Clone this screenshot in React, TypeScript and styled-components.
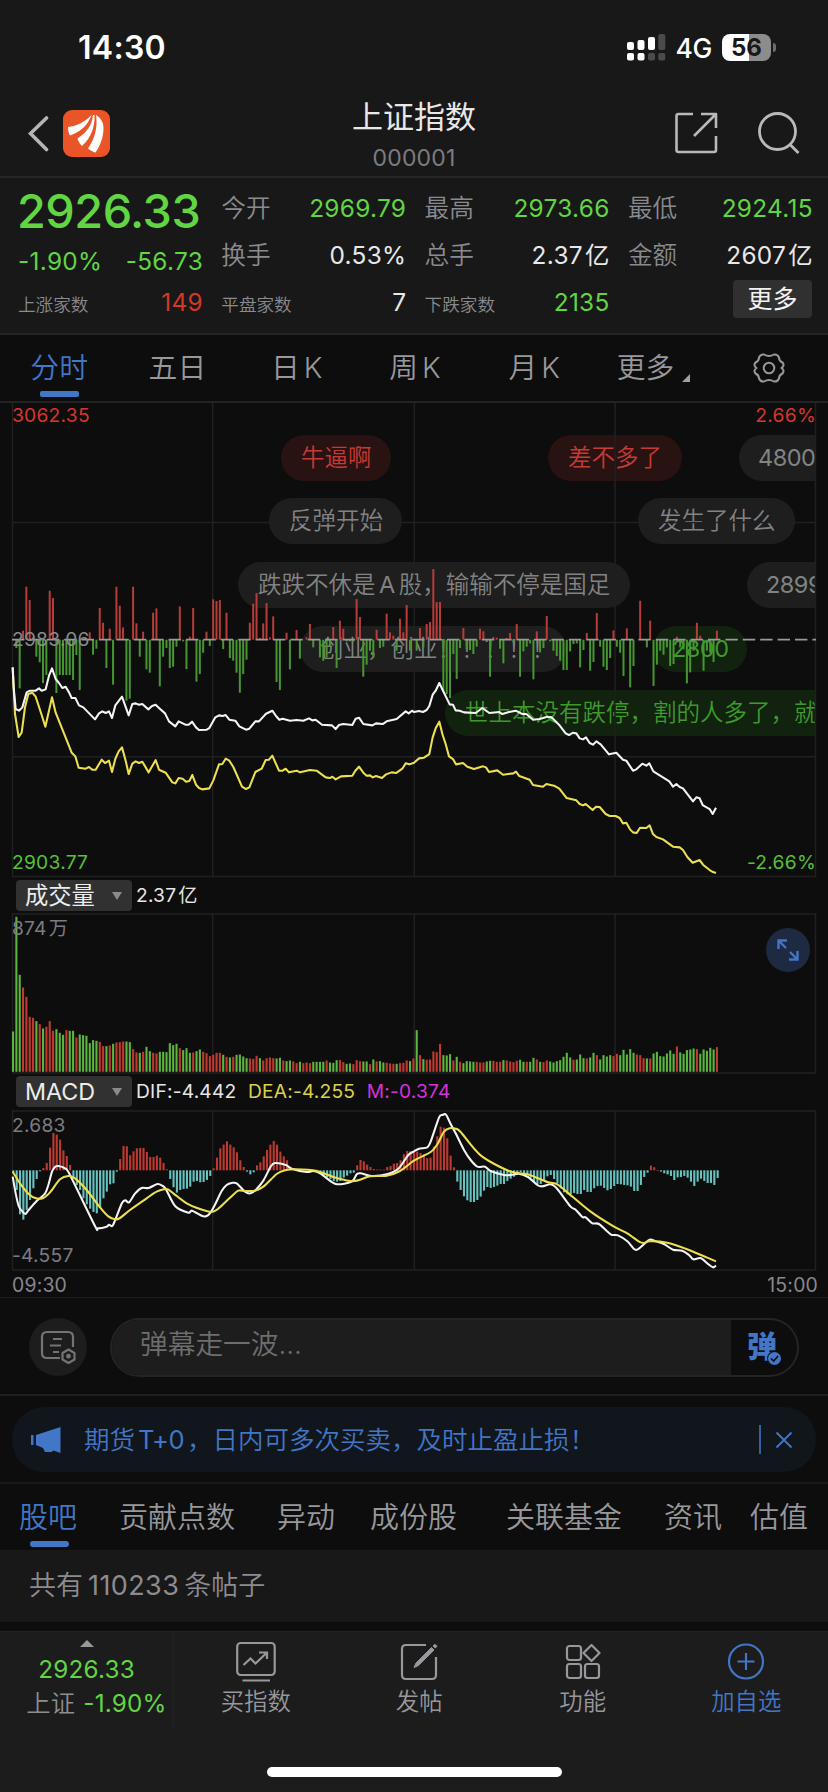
import React from "react";
import styled, { createGlobalStyle } from "styled-components";

const GREEN = "#62d543";
const RED = "#d8352b";
const BLUE = "#4276c6";
const GREY = "#8a8a8f";

const GlobalStyle = createGlobalStyle`
  * { box-sizing: border-box; }
  body {
    margin: 0;
    background: #0d0d0d;
    font-family: Inter, "Noto Sans CJK SC", sans-serif;
    -webkit-font-smoothing: antialiased;
  }
  svg { display: block; }
`;

/* ---------- market data ---------- */

/* Minute bars around the previous close: [minute, signed height]. */
const FLOW: number[][] = [
  [1,-25],[2,-146],[3,27],[4,159],[5,119],[7,-51],[8,-68],[9,-130],[10,-106],[11,147],[12,125],[13,-160],[14,-106],[15,-106],[16,-106],[17,-106],[18,-121],[19,-46],[20,-151],
  [23,22],[24,-45],[25,-27],[26,95],[27,51],[28,-85],[29,33],[30,-135],[31,159],[32,102],[33,37],[34,-183],[35,-177],[36,159],[37,49],[38,-51],[39,24],[40,-89],[41,-99],[42,81],[43,94],[44,-140],[45,-51],[46,-25],[47,-85],[48,-81],[49,-21],
  [50,100],[51,-5],[52,-88],[53,9],[54,95],[55,-126],[56,-103],[57,-39],[58,24],[59,-19],[60,121],[61,116],[62,119],[63,-28],[64,81],[65,-55],[66,-63],[67,-99],[68,-159],[69,-103],[70,-60],[71,51],[72,108],[73,140],[74,5],[75,49],[76,110],[77,7],[78,70],[79,-127],[80,-151],
  [82,21],[83,-89],[85,29],[86,-57],[88,7],[89,47],[90,-23],[92,-53],[93,-63],[94,-53],[95,-21],[96,38],[97,-85],[98,57],[99,33],[100,-5],[101,-5],[102,-5],[103,122],[104,68],[105,-111],[106,-75],[107,-33],[108,-53],[109,30],[110,-25],[111,-21],[112,78],[113,22],[114,12],[115,-33],[116,63],[117,22],[118,104],[119,-33],
  [121,-33],[122,35],[123,-23],[124,47],[125,53],[126,212],[127,113],[128,113],[129,-155],[130,-163],[131,-175],[132,-43],[133,-118],[134,-25],[135,35],[136,-29],[137,-31],[138,-43],[139,-21],[140,33],[141,25],[142,-7],[143,-111],[144,8],[145,6],[146,-27],[147,-71],[148,5],[149,20],[150,-7],[151,47],[152,-111],[153,-35],[154,-21],[155,-11],[156,-119],[157,25],[158,-38],[159,-25],
  [160,71],[161,-5],[162,-33],[163,-49],[164,-63],[165,-91],[166,-91],[167,-35],[168,-13],[169,-11],[170,-83],[171,-31],[172,20],[173,-93],[174,-67],[175,80],[176,-21],[177,-81],[178,-91],[179,-55],[180,28],[181,-21],[182,-39],[183,-109],[184,34],[185,-143],[186,-79],[188,117],[190,-23],[191,57],[192,-139],[193,-75],[194,-33],[195,-45],[196,-23],[197,-79],[198,-73],[199,9],
  [200,-23],[201,-29],[202,-131],[203,-98],[204,-33],[205,51],[206,12],[207,-93],[208,-33],[209,-39],[210,-67],[211,27],
];

/* Volume per minute; the letter tells a rising (r) from a falling (g) minute. */
const VOLUME = (
  "g121 g465 g291 r253 r225 r165 r162 g152 r143 g130 r135 r152 r123 g128 g117 g111 r125 g123 g123 r103 g112 g110 g108 g86 g95 g93 r90 r77 g77 r79 g84 r88 r89 r91 g91 g89 r68 r58 g57 r60 " +
  "g75 g62 r57 r55 g60 g60 g59 g86 g80 g84 r71 g65 g71 g57 r58 g62 g67 r60 r56 r47 r51 r57 r57 g51 r45 g43 r45 g51 g52 g46 g41 r40 r39 r48 g41 r34 r41 r43 r41 g40 g42 r34 g32 g34 r31 r26 g30 r26 r28 r26 " +
  "g30 g30 g30 g30 r34 g28 g27 g35 r35 r29 g24 g25 r23 r35 r32 g31 g31 r23 g37 r31 g32 g28 r27 r25 r24 g24 r26 r27 r34 g32 r40 " +
  "g125 r50 g38 r36 r37 r61 r59 r84 g50 g49 g53 r34 g45 r30 g26 g32 g31 g30 r30 r28 r28 g31 g33 r33 r30 r30 g35 r34 r31 r29 r33 g36 g30 r30 g30 g42 r37 g30 r29 r34 g31 g28 g32 g35 g45 g57 g43 r36 g37 g52 " +
  "g41 r40 g43 g57 r50 g37 g50 g46 g50 r47 r54 g50 g66 g52 g68 g57 r52 r50 r41 g40 r40 g55 g60 g47 g46 g55 g64 g54 r76 g58 g54 g65 g67 g70 r68 g54 g67 g63 g72 g67 r74"
).split(" ").map((s) => ({ up: s[0] === "r", h: Number(s.slice(1)) }));

/* MACD histogram, measured from the top of the pane with zero at 286. */
const MACD = [
  292,345,418,434,405,375,340,312,289,279,264,218,174,179,194,226,243,270,310,330,345,370,388,401,411,415,399,370,350,328,325,290,252,213,214,241,229,220,219,219,
  231,246,246,242,248,264,283,312,337,353,345,342,341,335,320,318,322,321,315,303,280,248,220,209,199,209,217,232,256,276,290,298,292,271,262,244,225,209,198,209,
  230,244,256,275,284,284,284,284,284,284,284,284,290,300,307,312,318,320,318,308,302,295,293,271,255,259,269,276,282,284,284,284,276,273,266,264,256,238,228,229,
  230,230,234,238,250,248,215,184,155,158,190,242,277,320,345,364,376,381,381,375,365,347,336,339,336,332,327,327,318,311,305,296,292,294,300,308,322,328,327,315,
  304,300,312,325,340,352,358,357,354,357,357,345,351,351,340,333,332,339,346,342,333,327,328,330,331,335,348,348,330,306,293,272,277,285,290,295,298,303,315,307,
  306,303,308,320,333,320,311,318,324,324,330,309,
];

type Session = [string, string];

const INDEX_LINE: Session = [
  "38,320 41,380 47,445 57,450 67,440 80,395 90,390 107,390 117,383 125,390 137,386 147,345 156,323 167,355 177,367 187,382 197,378 207,395 215,412 226,412 237,434 250,440 285,476 297,458 307,452 317,457 327,452 336,472 346,434 366,408 386,464 397,430 407,428 417,432 427,430 445,446 456,436 467,432 477,442 495,458 507,482 526,497 536,482 556,492 566,492 576,483 588,500 597,508 620,507 628,502 646,470 657,464 668,466 677,463 688,477 706,480 718,497 738,507 748,504 766,482 777,482 798,459 817,450 828,466 838,477 848,474 870,480 890,478 910,480 927,473 937,479 947,477 966,492 996,494 1007,505 1017,493 1030,490 1057,493 1067,474 1077,471 1090,490 1117,494 1128,488 1148,490 1160,482 1190,475 1217,452 1226,458 1236,450",
  "0,454 15,451 27,454 38,448 46,436 56,402 65,390 76,367 86,388 107,431 117,432 125,449 137,450 150,455 185,457 205,442 226,457 256,454 265,460 285,454 305,450 325,460 337,460 357,477 377,475 400,468 413,470 435,492 455,518 465,523 477,516 487,518 497,533 507,536 516,530 527,547 537,552 547,542 560,551 585,581 607,576 627,597 637,600 657,630 667,626 685,609 697,615 706,608 718,632 766,662 777,678 787,670 797,679 807,683 837,722 847,710 857,713 866,733 887,745 896,760 906,741",
];

const AVERAGE_LINE: Session = [
  "38,320 45,460 56,529 65,516 75,440 85,400 97,396 107,408 125,463 136,498 156,410 167,456 215,576 226,587 236,621 257,624 267,619 277,627 287,627 305,597 315,607 327,600 336,634 346,594 356,572 366,560 377,600 386,640 397,609 407,602 417,607 427,603 446,635 467,598 477,627 497,636 517,665 526,668 536,652 548,654 558,663 568,661 577,643 588,672 597,682 607,686 628,683 640,659 657,611 667,610 677,594 688,600 700,619 726,678 738,685 748,680 766,634 785,624 797,598 807,597 817,585 837,630 848,630 857,624 867,635 890,630 900,635 930,628 950,630 977,650 990,652 997,648 1007,656 1023,647 1057,645 1066,630 1077,618 1090,636 1100,645 1110,644 1118,650 1128,646 1146,652 1158,641 1175,635 1188,637 1207,624 1217,608 1228,611",
  "0,606 15,593 30,591 46,580 56,530 65,503 76,483 86,523 95,550 105,587 117,595 126,611 147,607 160,618 180,625 207,617 216,620 225,634 250,629 267,642 298,638 306,633 316,646 347,657 357,673 387,678 397,670 420,675 436,684 458,712 487,719 497,730 507,734 515,730 536,748 546,738 557,739 575,760 587,766 605,766 617,772 627,788 637,786 648,806 657,815 668,817 678,801 697,802 707,794 717,820 727,829 747,836 777,858 797,860 807,868 820,889 836,906 857,898 867,912 887,928 897,934 906,937",
];

const DIF_LINE: Session = [
  "38,305 47,355 56,393 66,408 76,417 86,405 110,378 135,356 145,330 156,290 165,276 175,273 195,280 210,300 285,453 293,460 320,455 327,449 337,453 346,434 366,384 376,376 387,382 405,356 425,339 446,339 472,327 487,332 498,343 526,394 565,413 576,407 607,423 620,423 632,412 646,387 665,348 680,330 695,324 710,325 735,350 752,355 768,344 790,317 812,275 825,264 858,270 875,281 920,291 940,288 962,296 1007,327 1055,320 1070,298 1082,295 1115,303 1160,298 1195,281 1225,240",
  "0,229 15,221 40,217 50,200 75,128 85,120 96,119 110,147 125,175 150,225 170,255 190,275 213,275 230,288 270,300 295,299 315,296 342,306 370,330 385,334 410,328 430,342 470,395 485,404 505,426 515,427 535,445 555,447 590,478 612,481 640,499 660,522 670,524 685,512 707,494 725,499 750,507 777,524 805,527 825,540 838,553 860,549 880,565 897,577 906,572",
];

const DEA_LINE: Session = [
  "38,290 60,325 85,356 108,370 130,369 150,352 180,313 205,303 225,310 260,345 300,397 325,424 345,433 360,429 390,405 440,370 470,350 500,342 520,355 560,385 600,402 635,411 655,401 690,368 715,347 735,348 765,347 790,335 830,297 855,286 885,283 950,288 1000,306 1050,318 1075,316 1110,304 1160,302 1200,288",
  "0,257 50,231 70,208 90,170 107,160 125,161 140,171 200,241 285,288 345,299 400,321 430,328 460,352 530,410 600,455 640,475 675,500 690,504 707,499 760,503 815,521 880,548 906,559",
];

const LUNCH = 1242;

function toPoints([am, pm]: Session): number[][] {
  const parse = (s: string, dx: number) =>
    s.split(" ").map((p) => {
      const [x, y] = p.split(",").map(Number);
      return [x + dx, y];
    });
  return [...parse(am, 0), ...parse(pm, LUNCH)];
}

function linePath(s: Session): string {
  return "M" + toPoints(s).map((p) => p.join(" ")).join("L");
}

function smoothPath(s: Session): string {
  const p = toPoints(s);
  let d = `M${p[0][0]} ${p[0][1]}`;
  for (let i = 0; i < p.length - 1; i++) {
    const a = p[Math.max(0, i - 1)];
    const b = p[i];
    const c = p[i + 1];
    const e = p[Math.min(p.length - 1, i + 2)];
    d += `C${b[0] + (c[0] - a[0]) / 7} ${b[1] + (c[1] - a[1]) / 7} ${c[0] - (e[0] - b[0]) / 7} ${c[1] - (e[1] - b[1]) / 7} ${c[0]} ${c[1]}`;
  }
  return d;
}

/* ---------- page shell ---------- */

const Page = styled.main`
  width: 828px;
  height: 1792px;
  display: flex;
  flex-direction: column;
  overflow: hidden;
  background: #0d0d0d;
  color: #e6e6e6;
`;

const StatusBar = styled.div`
  height: 94px;
  flex: none;
  display: flex;
  align-items: center;
  justify-content: space-between;
  padding: 1px 57px 0 78px;
  background: #181818;
`;

const Clock = styled.span`
  font-size: 32px;
  font-weight: 600;
  line-height: 40px;
  color: #fff;
  letter-spacing: 0.3px;
`;

const StatusIcons = styled.div`
  display: flex;
  align-items: center;
  gap: 10px;
`;

const Network = styled.span`
  font-size: 26.5px;
  font-weight: 500;
  letter-spacing: -0.4px;
  line-height: 30px;
  color: #fff;
`;

const Battery = styled.div`
  position: relative;
  width: 49px;
  height: 27px;
  border-radius: 8px;
  background: linear-gradient(90deg, #fff 56%, #8c8c8c 56%);
  color: #181818;
  font-size: 24px;
  font-weight: 700;
  line-height: 27px;
  text-align: center;
  &::after {
    content: "";
    position: absolute;
    left: 51px;
    top: 9px;
    width: 3px;
    height: 9px;
    border-radius: 0 3px 3px 0;
    background: #6d6d6d;
  }
`;

const Header = styled.header`
  height: 84px;
  flex: none;
  display: grid;
  grid-template-columns: 200px 1fr 200px;
  background: #181818;
  border-bottom: 2px solid #262626;
`;

const HeaderLeft = styled.div`
  display: flex;
  align-items: flex-start;
  gap: 13px;
  padding: 16px 0 0 28px;
`;

const HeaderRight = styled.div`
  display: flex;
  justify-content: flex-end;
  gap: 39.5px;
  padding: 18px 27px 0 0;
`;

const HeaderTitle = styled.div`
  display: flex;
  flex-direction: column;
  align-items: center;
`;

const Name = styled.h1`
  margin: 3px 0 0;
  font-size: 31px;
  font-weight: 400;
  line-height: 40px;
  color: #e8e8e8;
`;

const Code = styled.span`
  font-size: 23px;
  line-height: 28px;
  margin-top: 7px;
  letter-spacing: 0.15px;
  color: #7c7c80;
`;

/* ---------- quote ---------- */

const Quote = styled.section`
  height: 157px;
  flex: none;
  display: grid;
  grid-template-columns: repeat(4, 184px);
  column-gap: 19.3px;
  padding: 6px 0 0 18px;
  background: #181818;
  border-bottom: 2px solid #242424;
`;

const QuoteColumn = styled.div`
  display: flex;
  flex-direction: column;
`;

const Price = styled.div`
  height: 53px;
  margin-left: -1px;
  font-size: 46.8px;
  font-weight: 500;
  line-height: 54px;
  letter-spacing: -0.5px;
  color: ${GREEN};
`;

const QuoteRow = styled.div<{ $h?: number; $top?: number }>`
  height: ${(p) => p.$h ?? 47}px;
  padding-top: ${(p) => p.$top ?? 0}px;
  display: flex;
  align-items: center;
  justify-content: space-between;
`;

const Label = styled.span<{ $small?: boolean }>`
  font-size: ${(p) => (p.$small ? 17.6 : 24.7)}px;
  font-weight: 350;
  line-height: 30px;
  padding-top: ${(p) => (p.$small ? 7 : 0)}px;
  color: ${GREY};
`;

const Value = styled.span<{ $color?: string }>`
  margin-right: -1px;
  font-size: 24.4px;
  line-height: 30px;
  letter-spacing: 0.3px;
  color: ${(p) => p.$color ?? "#e8e8e8"};
`;

const Unit = styled.span`
  margin-left: 2px;
`;

const MoreButton = styled.button`
  width: 79px;
  height: 38px;
  margin: -5px 0 0 auto;
  padding: 0;
  border: 0;
  border-radius: 4px;
  background: #303030;
  color: #f2f2f2;
  font: 400 25px/38px Inter, "Noto Sans CJK SC", sans-serif;
`;

/* ---------- period tabs ---------- */

const Periods = styled.nav`
  height: 68px;
  flex: none;
  display: grid;
  grid-template-columns: repeat(7, 1fr);
  border-bottom: 2px solid #232323;
`;

const Period = styled.div<{ $active?: boolean; $shift?: number }>`
  position: relative;
  display: flex;
  align-items: center;
  justify-content: center;
  gap: 8px;
  padding-left: ${(p) => p.$shift ?? 0}px;
  font-size: 28.8px;
  font-weight: 350;
  line-height: 66px;
  color: ${(p) => (p.$active ? BLUE : "#98989c")};
  ${(p) =>
    p.$active &&
    `&::after {
      content: "";
      position: absolute;
      bottom: 4px;
      width: 39px;
      height: 6px;
      border-radius: 2px;
      background: ${BLUE};
    }`}
`;

const Spread = styled.span`
  display: inline-flex;
  gap: 4px;
  padding-left: 2px;
`;

const Corner = styled.i`
  width: 0;
  height: 0;
  margin-top: 20px;
  border-left: 8px solid transparent;
  border-bottom: 8px solid #a0a0a4;
`;

/* ---------- charts ---------- */

const Pane = styled.section<{ $h: number }>`
  position: relative;
  height: ${(p) => p.$h}px;
  flex: none;
  overflow: hidden;
`;

const Plot = styled.svg`
  position: relative;
`;

const Mark = styled.span<{ $color: string; $top: number; $right?: boolean }>`
  position: absolute;
  top: ${(p) => p.$top}px;
  ${(p) => (p.$right ? "right: 12px;" : "left: 12px;")}
  font-size: 19.2px;
  line-height: 24px;
  letter-spacing: 0.25px;
  color: ${(p) => p.$color};
`;

const TONES = {
  grey: { bg: "#1e1e1e", fg: "#838383" },
  red: { bg: "#291212", fg: "#c63a35" },
  green: { bg: "#11220f", fg: "#3f9a2c" },
};

const BarrageLayer = styled.div`
  position: absolute;
  left: 0;
  top: 0;
  width: 816px;
  height: 100%;
  overflow: hidden;
`;

const Barrage = styled.span<{
  $tone: keyof typeof TONES;
  $x: number;
  $row: number;
  $w: number;
  $number?: boolean;
}>`
  position: absolute;
  left: ${(p) => p.$x}px;
  top: ${(p) => 31.5 + p.$row * 63.9}px;
  width: ${(p) => p.$w}px;
  height: 46px;
  padding-left: ${(p) => (p.$number ? 19 : 20)}px;
  border-radius: 23px;
  font-size: 23.5px;
  font-weight: ${(p) => (p.$number ? 400 : 350)};
  line-height: 46px;
  letter-spacing: ${(p) => (p.$number ? "-0.5px" : "0")};
  white-space: pre;
  background: ${(p) => TONES[p.$tone].bg};
  color: ${(p) => TONES[p.$tone].fg};
`;

const Latin = styled.span<{ $gap?: number; $track?: number }>`
  margin: 0 ${(p) => p.$gap ?? 3.5}px;
  font-weight: 400;
  letter-spacing: ${(p) => p.$track ?? 0}px;
`;

const IndicatorBar = styled.div<{ $h: number; $top: number }>`
  height: ${(p) => p.$h}px;
  flex: none;
  display: flex;
  align-items: flex-start;
  padding: ${(p) => p.$top}px 0 0 16px;
  font-size: 19.2px;
  line-height: 31px;
`;

const Picker = styled.div`
  width: 116px;
  height: 31px;
  display: flex;
  align-items: center;
  justify-content: space-between;
  padding: 0 10px 0 9px;
  margin-right: 4px;
  border-radius: 4px;
  background: #313131;
  color: #ececec;
  font-size: 23.3px;
  &::after {
    content: "";
    border: 5px solid transparent;
    border-top: 8px solid #8a8a8e;
    border-bottom: 0;
  }
`;

const Reading = styled.span<{ $color: string }>`
  margin-right: 11.5px;
  letter-spacing: 0.2px;
  color: ${(p) => p.$color};
`;

const Expand = styled.button`
  position: absolute;
  left: 766px;
  top: 15px;
  width: 44px;
  height: 44px;
  padding: 11px;
  border: 0;
  border-radius: 50%;
  background: #1d2a42;
`;

const TimeAxis = styled.div`
  height: 27px;
  flex: none;
  display: flex;
  justify-content: space-between;
  padding: 0 10px 0 12px;
  font-size: 19.4px;
  letter-spacing: 0.2px;
  line-height: 29px;
  color: #88888c;
  border-bottom: 1px solid #1b1b1b;
`;

/* ---------- comment entry ---------- */

const EntryBar = styled.section`
  height: 98px;
  flex: none;
  display: flex;
  align-items: flex-start;
  gap: 23px;
  padding: 20px 29px 0;
  border-bottom: 2px solid #1f1f1f;
`;

const RoundButton = styled.button`
  width: 58px;
  height: 58px;
  padding: 0;
  display: grid;
  place-items: center;
  border: 0;
  border-radius: 50%;
  background: #1d1d1d;
`;

const Entry = styled.div`
  width: 689px;
  height: 59px;
  display: flex;
  border: 2px solid #242424;
  border-radius: 30px;
  overflow: hidden;
`;

const Placeholder = styled.div`
  width: 619px;
  padding-left: 28px;
  background: #1d1d1d;
  color: #6e6e70;
  font-size: 27.7px;
  font-weight: 350;
  line-height: 49px;
`;

const BarrageSwitch = styled.div`
  position: relative;
  padding-left: 16px;
  color: ${BLUE};
  font-size: 30px;
  font-weight: 900;
  line-height: 52px;
  svg {
    position: absolute;
    left: 36px;
    top: 31px;
  }
`;

/* ---------- notice ---------- */

const NoticeWrap = styled.section`
  height: 88px;
  flex: none;
  padding: 11px 12px 0;
  border-bottom: 2px solid #191919;
`;

const Notice = styled.div`
  height: 65px;
  display: flex;
  align-items: center;
  padding: 0 23px 0 19px;
  border-radius: 32px;
  background: #11161d;
  color: ${BLUE};
  font-size: 25.5px;
  font-weight: 350;
`;

const NoticeText = styled.span`
  flex: 1;
  margin-left: 22px;
  line-height: 62px;
  white-space: pre;
`;

const Rule = styled.i`
  width: 2px;
  height: 29px;
  margin-right: 14px;
  background: #35609f;
`;

/* ---------- section tabs ---------- */

const Sections = styled.nav`
  height: 66px;
  flex: none;
  display: flex;
  padding-left: 19px;
`;

const SectionTab = styled.div<{ $gap: number; $active?: boolean }>`
  position: relative;
  margin-left: ${(p) => p.$gap}px;
  font-size: 29px;
  font-weight: 350;
  line-height: 67px;
  white-space: nowrap;
  color: ${(p) => (p.$active ? BLUE : "#98989c")};
  ${(p) =>
    p.$active &&
    `&::after {
      content: "";
      position: absolute;
      left: 11px;
      bottom: 3px;
      width: 39px;
      height: 6px;
      border-radius: 3px;
      background: ${BLUE};
    }`}
`;

const PostCount = styled.div`
  height: 72px;
  flex: none;
  padding-left: 29px;
  background: #181818;
  color: #8c8c90;
  font-size: 27px;
  font-weight: 350;
  line-height: 72px;
`;

/* ---------- bottom bar ---------- */

const BottomBar = styled.footer`
  position: relative;
  height: 162px;
  flex: none;
  margin-top: 9px;
  display: grid;
  grid-template-columns: 174px repeat(4, 163.5px);
  align-items: start;
  background: #1c1c1c;
  border-top: 1px solid #222;
`;

const Ticker = styled.div`
  height: 96px;
  display: flex;
  flex-direction: column;
  align-items: center;
  padding-top: 8px;
  border-right: 1px solid #212121;
  &::before {
    content: "";
    margin-bottom: 5px;
    border: 7px solid transparent;
    border-bottom: 7px solid #98989c;
    border-top: 0;
  }
`;

const TickerLine = styled.span<{ $shift?: number }>`
  padding-left: ${(p) => p.$shift ?? 0}px;
  font-size: 24.3px;
  line-height: 34px;
  letter-spacing: 0.2px;
  white-space: nowrap;
  color: ${GREEN};
`;

const Market = styled.span`
  margin-right: 8px;
  font-weight: 350;
  color: #8e8e92;
`;

const Action = styled.div<{ $primary?: boolean }>`
  display: flex;
  flex-direction: column;
  align-items: center;
  padding-top: 9px;
  font-size: 23.4px;
  font-weight: 350;
  line-height: 30px;
  color: ${(p) => (p.$primary ? BLUE : "#98989c")};
  svg { margin-bottom: 5px; }
`;

const HomeIndicator = styled.div`
  position: absolute;
  left: 267px;
  bottom: 16px;
  width: 295px;
  height: 10px;
  border-radius: 5px;
  background: #fff;
`;

/* ---------- drawings ---------- */

const GRID_X = [12.5, 212.7, 414.3, 615, 815.5];

function Grid({ h, rows, top = 0 }: { h: number; rows: number[]; top?: number }) {
  return (
    <g stroke="#202020" strokeWidth="1.5">
      {GRID_X.map((x) => (
        <line key={x} x1={x} x2={x} y1={top} y2={h} />
      ))}
      {rows.map((y) => (
        <line key={y} x1="12" x2="816" y1={y} y2={y} />
      ))}
    </g>
  );
}

function PricePlot() {
  return (
    <Plot width="828" height="475" viewBox="0 0 828 475">
      <Grid h={474} rows={[119.5, 353.7, 473.5]} />
      {FLOW.map(([i, v]) => (
        <rect
          key={i}
          x={12 + i * 3.336}
          width="2"
          y={v > 0 ? 236.7 - v / 3 : 236.7}
          height={Math.abs(v) / 3}
          fill={v > 0 ? "#b63d38" : "#469730"}
        />
      ))}
      <line x1="12" x2="816" y1="236.7" y2="236.7" stroke="#9a9a9a" strokeWidth="1.8" strokeDasharray="12.4 5" />
      <g transform="translate(0 157.7) scale(.33333)" fill="none" strokeLinejoin="round" strokeWidth="6.2">
        <path d={linePath(AVERAGE_LINE)} stroke="#ece04e" />
        <path d={linePath(INDEX_LINE)} stroke="#f4f4f4" />
      </g>
    </Plot>
  );
}

function VolumePlot() {
  return (
    <Plot width="828" height="161" viewBox="0 0 828 161">
      <Grid h={160} rows={[1, 160]} />
      {VOLUME.map((b, i) => (
        <rect
          key={i}
          x={12 + i * 3.336}
          width="2.1"
          y={158.8 - b.h / 3}
          height={b.h / 3}
          fill={b.up ? "#c03a31" : "#5cb53e"}
        />
      ))}
    </Plot>
  );
}

function MacdPlot() {
  return (
    <Plot width="828" height="161" viewBox="0 0 828 161">
      <Grid h={160} rows={[1, 160]} />
      {MACD.map((v, i) => (
        <rect
          key={i}
          x={12.3 + i * 3.338}
          width="2.1"
          y={60.3 + Math.min(0, v - 286) / 3}
          height={Math.max(0.7, Math.abs(v - 286) / 3)}
          fill={v < 286 ? "#bd3a31" : "#66c3c0"}
        />
      ))}
      <g transform="translate(0 -35) scale(.33333)" fill="none" strokeLinejoin="round" strokeWidth="6.2">
        <path d={smoothPath(DIF_LINE)} stroke="#f4f4f4" />
        <path d={smoothPath(DEA_LINE)} stroke="#ece04e" />
      </g>
    </Plot>
  );
}

function SignalIcon() {
  const bars = [
    { x: 0, y: 8, dot: "#fff", bar: "#fff" },
    { x: 10.5, y: 6, dot: "#fff", bar: "#fff" },
    { x: 21, y: 3, dot: "#4b4b4b", bar: "#fff" },
    { x: 31.3, y: 0, dot: "#4b4b4b", bar: "#4b4b4b" },
  ];
  return (
    <svg width="39" height="27" viewBox="0 0 39 27">
      {bars.map((b) => (
        <g key={b.x}>
          <rect x={b.x} y={b.y} width="7" height={16 - b.y} rx="2" fill={b.bar} />
          <rect x={b.x} y="19" width="7" height="7.5" rx="2" fill={b.dot} />
        </g>
      ))}
    </svg>
  );
}

function BackIcon() {
  return (
    <svg width="22" height="46" viewBox="0 0 22 46" fill="none" stroke="#b5b5b8" strokeWidth="3.6" strokeLinecap="round">
      <path d="M18.500 8 2.500 23.500 18.500 39.500" />
    </svg>
  );
}

function BrandIcon() {
  return (
    <svg width="47" height="47" viewBox="0 0 47 47">
      <rect width="47" height="47" rx="9" fill="#ea5527" />
      <g fill="#fff">
        <path d="M5 17C14 16 22 12 28.500 5 25.500 14 19 21 7 25.500 5.500 23 5 20 5 17Z" />
        <path d="M30 5C29 16 23 23 14.500 28.500 15.500 31.500 17 34 19 36 28 28 32 17 31.500 5Z" />
        <path d="M33 5C35 18 31.500 29 25 38.500 27.500 40.500 30 42 32.500 42.500 38 35 42 23 40 13.500 38.500 9.500 36 6.500 33 5Z" />
      </g>
    </svg>
  );
}

function ShareIcon() {
  return (
    <svg width="43" height="42" viewBox="0 0 43 42" fill="none" stroke="#b9b9bc" strokeWidth="2.6" strokeLinejoin="round">
      <path d="M18 2H3.500Q1.500 2 1.500 4V38Q1.500 40 3.500 40H39Q41 40 41 38V24" />
      <path d="M26 2H41V16M41 2 19 24" />
    </svg>
  );
}

function SearchIcon() {
  return (
    <svg width="44" height="43" viewBox="0 0 44 43" fill="none" stroke="#b9b9bc" strokeWidth="2.8">
      <circle cx="20.500" cy="19.500" r="18" />
      <path d="M32.500 32 41.500 41" />
    </svg>
  );
}

function GearIcon() {
  return (
    <svg width="32" height="30" viewBox="0 0 32 30" fill="none" stroke="#98989c" strokeWidth="2" strokeLinejoin="round">
      <path d="M11 1.500Q16 4.500 21 1.500 24.500 1 26 4.500 26 8 29.500 9.500 32 12.500 28.500 15 32 17.500 29.500 20.500 26 22 26 25.500 24.500 29 21 28.500 16 25.500 11 28.500 7.500 29 6 25.500 6 22 2.500 20.500 0 17.500 3.500 15 0 12.500 2.500 9.500 6 8 6 4.500 7.500 1 11 1.500Z" />
      <circle cx="16" cy="15" r="5.300" />
    </svg>
  );
}

function ExpandIcon() {
  return (
    <svg width="22" height="22" viewBox="0 0 22 22" fill="none" stroke={BLUE} strokeWidth="2.4">
      <path d="M1.500 10V1.500H10M1.500 1.500 9 9M20.500 12V20.500H12M20.500 20.500 13 13" />
    </svg>
  );
}

function BarrageSettingsIcon() {
  return (
    <svg width="38" height="36" viewBox="0 0 38 36" fill="none" stroke="#747477" strokeWidth="2.200">
      <path d="M21 29H8Q3 29 3 24V8Q3 3 8 3H29Q34 3 34 8V18M14 10H23M11 16.500H22M14 23H20" />
      <path d="M29.500 20.500 35.500 24V30.500L29.500 34 23.500 30.500V24Z" strokeLinejoin="round" />
      <circle cx="29.500" cy="27.200" r="1.300" />
    </svg>
  );
}

function CheckBadge() {
  return (
    <svg width="15" height="15" viewBox="0 0 15 15">
      <circle cx="7.500" cy="7.500" r="7.500" fill="#0d0d0d" />
      <circle cx="7.500" cy="7.500" r="6.500" fill={BLUE} />
      <path d="M4 7.500 6.700 10 11 5" fill="none" stroke="#0d0d0d" strokeWidth="1.700" />
    </svg>
  );
}

function HornIcon() {
  return (
    <svg width="31" height="28" viewBox="0 0 31 28" fill={BLUE}>
      <path d="M0 9H2.500V19H0ZM5 9 29.500 1V27L22.500 24.500 20.500 26H14L12 22 5 19Z" />
    </svg>
  );
}

function CloseIcon() {
  return (
    <svg width="18" height="18" viewBox="0 0 18 18" fill="none" stroke={BLUE} strokeWidth="1.800">
      <path d="M1.500 1.500 16.500 16.500M16.500 1.500 1.500 16.500" />
    </svg>
  );
}

function ChartIcon() {
  return (
    <svg width="40" height="41" viewBox="0 0 40 41" fill="none" stroke="#98989c" strokeWidth="2.200">
      <rect x="1.200" y="2" width="37.500" height="32" rx="3.500" />
      <path d="M6.500 39.500H34M7.500 24 14.500 17.500 19.500 22.500 30.500 12M23 11.500H31V18" />
    </svg>
  );
}

function PostIcon() {
  return (
    <svg width="38" height="41" viewBox="0 0 38 41" fill="none" stroke="#98989c" strokeWidth="2.200">
      <path d="M26 4H6Q2 4 2 8V34Q2 38 6 38H32Q36 38 36 34V16" />
      <path d="M14 26.500 16 22 31.500 6.500 34 9 18.500 24.500ZM33 5 35 3.300 37 5.300 35.300 7Z" fill="#98989c" strokeWidth="1" />
    </svg>
  );
}

function GridIcon() {
  return (
    <svg width="36" height="41" viewBox="0 0 36 41" fill="none" stroke="#98989c" strokeWidth="2.200" strokeLinejoin="round">
      <rect x="2" y="5" width="14" height="14" rx="2.500" />
      <path d="M26.500 4 34.500 12 26.500 20 18.500 12Z" />
      <rect x="2" y="23" width="14" height="14" rx="2.500" />
      <rect x="20" y="23" width="14" height="14" rx="2.500" />
    </svg>
  );
}

function AddIcon() {
  return (
    <svg width="38" height="41" viewBox="0 0 38 41" fill="none" stroke={BLUE} strokeWidth="2.200">
      <circle cx="19" cy="20.500" r="17" />
      <path d="M19 12V29M10.500 20.500H27.500" />
    </svg>
  );
}

/* ---------- page ---------- */

type Quoted = { label: string; value: string; unit?: string; color?: string };

const COLUMNS: Quoted[][] = [
  [
    { label: "今开", value: "2969.79", color: GREEN },
    { label: "换手", value: "0.53%" },
    { label: "平盘家数", value: "7" },
  ],
  [
    { label: "最高", value: "2973.66", color: GREEN },
    { label: "总手", value: "2.37", unit: "亿" },
    { label: "下跌家数", value: "2135", color: GREEN },
  ],
  [
    { label: "最低", value: "2924.15", color: GREEN },
    { label: "金额", value: "2607", unit: "亿" },
  ],
];

export default function App() {
  return (
    <>
      <GlobalStyle />
      <Page>
        <StatusBar>
          <Clock>14:30</Clock>
          <StatusIcons>
            <SignalIcon />
            <Network>4G</Network>
            <Battery>56</Battery>
          </StatusIcons>
        </StatusBar>

        <Header>
          <HeaderLeft>
            <BackIcon />
            <BrandIcon />
          </HeaderLeft>
          <HeaderTitle>
            <Name>上证指数</Name>
            <Code>000001</Code>
          </HeaderTitle>
          <HeaderRight>
            <ShareIcon />
            <SearchIcon />
          </HeaderRight>
        </Header>

        <Quote>
          <QuoteColumn>
            <Price>2926.33</Price>
            <QuoteRow $h={41} $top={6}>
              <Value $color={GREEN}>-1.90%</Value>
              <Value $color={GREEN}>-56.73</Value>
            </QuoteRow>
            <QuoteRow>
              <Label $small>上涨家数</Label>
              <Value $color={RED}>149</Value>
            </QuoteRow>
          </QuoteColumn>
          {COLUMNS.map((rows, c) => (
            <QuoteColumn key={c}>
              {rows.map(({ label, value, unit, color }) => (
                <QuoteRow key={label}>
                  <Label $small={label.length > 2}>{label}</Label>
                  <Value $color={color}>
                    {value}
                    {unit && <Unit>{unit}</Unit>}
                  </Value>
                </QuoteRow>
              ))}
              {c === 2 && (
                <QuoteRow>
                  <MoreButton>更多</MoreButton>
                </QuoteRow>
              )}
            </QuoteColumn>
          ))}
        </Quote>

        <Periods>
          <Period $active>分时</Period>
          <Period>五日</Period>
          <Period><Spread>日<span>K</span></Spread></Period>
          <Period><Spread>周<span>K</span></Spread></Period>
          <Period $shift={2}><Spread>月<span>K</span></Spread></Period>
          <Period $shift={6}>更多<Corner /></Period>
          <Period><GearIcon /></Period>
        </Periods>

        <Pane $h={475}>
          <BarrageLayer>
            <Barrage $tone="red" $row={0} $x={281} $w={110}>牛逼啊</Barrage>
            <Barrage $tone="red" $row={0} $x={548} $w={134}>差不多了</Barrage>
            <Barrage $tone="grey" $row={0} $x={739} $w={120} $number>4800</Barrage>
            <Barrage $tone="grey" $row={1} $x={269} $w={133}>反弹开始</Barrage>
            <Barrage $tone="grey" $row={1} $x={638} $w={157}>发生了什么</Barrage>
            <Barrage $tone="grey" $row={2} $x={238} $w={392}>
              跌跌不休是<Latin>A</Latin>股，输输不停是国足
            </Barrage>
            <Barrage $tone="grey" $row={2} $x={747} $w={120} $number>2899</Barrage>
            <Barrage $tone="grey" $row={3} $x={300} $w={266}>创业，创业！！！！！</Barrage>
            <Barrage $tone="green" $row={3} $x={653} $w={94} $number>2800</Barrage>
            <Barrage $tone="green" $row={4} $x={445} $w={460}>世上本没有跌停，割的人多了，就</Barrage>
          </BarrageLayer>
          <PricePlot />
          <Mark $top={0} $color={RED}>3062.35</Mark>
          <Mark $top={0} $right $color={RED}>2.66%</Mark>
          <Mark $top={223.5} $color="#8a8a8e">2983.06</Mark>
          <Mark $top={447} $color="#57c03a">2903.77</Mark>
          <Mark $top={447} $right $color="#57c03a">-2.66%</Mark>
        </Pane>

        <IndicatorBar $h={35} $top={2}>
          <Picker>成交量</Picker>
          <Reading $color="#e6e6e6">2.37<Unit>亿</Unit></Reading>
        </IndicatorBar>
        <Pane $h={161}>
          <VolumePlot />
          <Mark $top={3} $color="#7c7c80">874<Unit>万</Unit></Mark>
          <Expand><ExpandIcon /></Expand>
        </Pane>

        <IndicatorBar $h={36} $top={2}>
          <Picker>MACD</Picker>
          <Reading $color="#e6e6e6">DIF:-4.442</Reading>
          <Reading $color="#dcd04a">DEA:-4.255</Reading>
          <Reading $color="#d432d8">M:-0.374</Reading>
        </IndicatorBar>
        <Pane $h={161}>
          <MacdPlot />
          <Mark $top={3} $color="#7c7c80">2.683</Mark>
          <Mark $top={133} $color="#7c7c80">-4.557</Mark>
        </Pane>
        <TimeAxis>
          <span>09:30</span>
          <span>15:00</span>
        </TimeAxis>

        <EntryBar>
          <RoundButton><BarrageSettingsIcon /></RoundButton>
          <Entry>
            <Placeholder>弹幕走一波...</Placeholder>
            <BarrageSwitch>弹<CheckBadge /></BarrageSwitch>
          </Entry>
        </EntryBar>

        <NoticeWrap>
          <Notice>
            <HornIcon />
            <NoticeText>期货<Latin $gap={3} $track={-0.5}>T+0</Latin>，日内可多次买卖，及时止盈止损！</NoticeText>
            <Rule />
            <CloseIcon />
          </Notice>
        </NoticeWrap>

        <Sections>
          <SectionTab $gap={0} $active>股吧</SectionTab>
          <SectionTab $gap={42}>贡献点数</SectionTab>
          <SectionTab $gap={42}>异动</SectionTab>
          <SectionTab $gap={35}>成份股</SectionTab>
          <SectionTab $gap={49}>关联基金</SectionTab>
          <SectionTab $gap={42}>资讯</SectionTab>
          <SectionTab $gap={28}>估值</SectionTab>
        </Sections>

        <PostCount>共有<Latin $gap={5} $track={0.4}>110233</Latin>条帖子</PostCount>

        <BottomBar>
          <Ticker>
            <TickerLine>2926.33</TickerLine>
            <TickerLine $shift={20}><Market>上证</Market>-1.90%</TickerLine>
          </Ticker>
          <Action><ChartIcon />买指数</Action>
          <Action><PostIcon />发帖</Action>
          <Action><GridIcon />功能</Action>
          <Action $primary><AddIcon />加自选</Action>
          <HomeIndicator />
        </BottomBar>
      </Page>
    </>
  );
}
